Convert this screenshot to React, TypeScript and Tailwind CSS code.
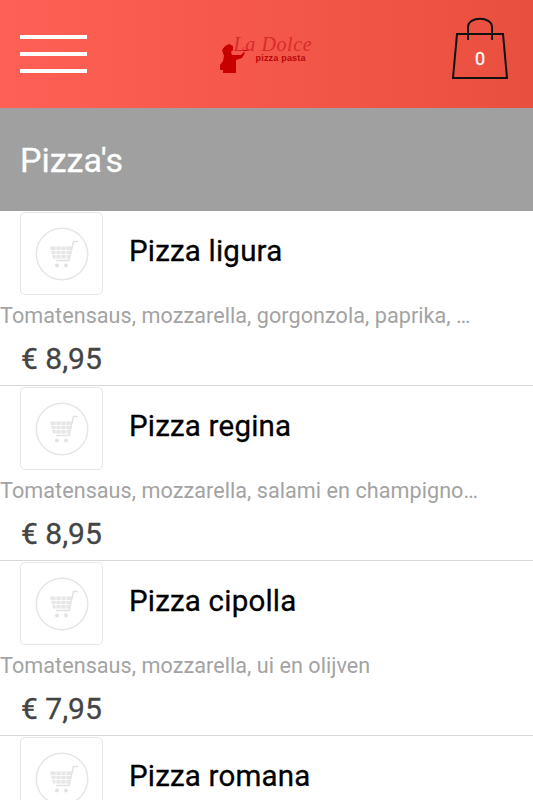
const pizzas = [
  { name: "Pizza ligura", desc: "Tomatensaus, mozzarella, gorgonzola, paprika, mais en ui", price: "€ 8,95" },
  { name: "Pizza regina", desc: "Tomatensaus, mozzarella, salami en champignons en ham", price: "€ 8,95" },
  { name: "Pizza cipolla", desc: "Tomatensaus, mozzarella, ui en olijven", price: "€ 7,95" },
  { name: "Pizza romana", desc: "Tomatensaus, mozzarella, ham en ananas", price: "€ 8,95" },
];

function CartThumb() {
  return (
    <div className="flex h-[83px] w-[83px] shrink-0 items-center justify-center rounded-[5px] border-[1.5px] border-[#e6e6e6] bg-white">
      <svg width="54" height="54" viewBox="0 0 54 54" fill="none">
        <circle cx="27" cy="27" r="25.7" stroke="#e6e6e6" strokeWidth="1.5" />
        <path d="M43 14.5h-4.5l-4.5 19H21" stroke="#e2e2e2" strokeWidth="1.5" />
        <path d="M15 19.5h22l-3 12H18z" fill="#e6e6e6" />
        <path d="M21 19.5v12M26 19.5v12M31 19.5v12M16 23.5h20M17 27.5h18" stroke="#fff" strokeWidth="0.8" />
        <circle cx="22" cy="38.5" r="2" fill="#e2e2e2" />
        <circle cx="31" cy="38.5" r="2" fill="#e2e2e2" />
      </svg>
    </div>
  );
}

function Logo() {
  return (
    <div className="relative h-[40px] w-[94px] text-[#b80808]">
      <svg className="absolute left-[-3px] top-[9px]" width="28" height="31" viewBox="0 0 28 31" fill="#c90000">
        <path d="M5 3l4-2 4 2 0 4-2 2 1 3 9 0 3-3 1 1-3 5-6 2 0 13-13 0 0-3-3 0 0-5 3-4 1-5-1-3-1-3z" />
        <path d="M23 7h5v1h-5z" />
      </svg>
      <span className="absolute left-[11px] top-[2px] font-['Liberation_Serif',serif] text-[20px] italic leading-[16px] tracking-[0.6px] text-[#d92b2b]">
        La Dolce
      </span>
      <span className="absolute left-[33px] top-[18px] font-['Liberation_Sans',sans-serif] text-[9px] font-bold leading-[12px] tracking-[0.2px]">
        pizza pasta
      </span>
    </div>
  );
}

export default function App() {
  return (
    <div className="h-[800px] w-[533px] overflow-hidden bg-white font-['Roboto',sans-serif]">
      <header className="flex h-[108px] items-center justify-between bg-gradient-to-r from-[#ff6055] to-[#e94f3e] pl-5 pr-[25px]">
        <div className="flex w-[67px] flex-col gap-[13px]">
          <span className="h-[4px] bg-white" />
          <span className="h-[4px] bg-white" />
          <span className="h-[4px] bg-white" />
        </div>
        <Logo />
        <div className="relative mb-[12px] h-[62px] w-[56px]">
          <svg width="56" height="62" viewBox="0 0 56 62" fill="none" stroke="#111" strokeWidth="2">
            <path d="M5 17H51L55 61H1z" />
            <path d="M16 23V10C16 -1 40 -1 40 10V23" />
          </svg>
          <span className="absolute left-0 right-0 top-[31px] text-center text-[18px] leading-[22px] text-white [-webkit-text-stroke:0.3px_#fff]">0</span>
        </div>
      </header>
      <div className="flex h-[103px] items-center bg-[#a0a0a0] px-5">
        <h1 className="text-[34px] leading-none text-white [-webkit-text-stroke:0.3px_#fff]">Pizza's</h1>
      </div>
      <ul>
        {pizzas.map((p) => (
          <li key={p.name} className="h-[175px] border-b border-[#d8d8d8] pt-px">
            <div className="flex items-center gap-[26px] pl-5">
              <CartThumb />
              <span className="mb-[3px] text-[29.5px] leading-none tracking-[0.2px] text-black [-webkit-text-stroke:0.3px_#000]">{p.name}</span>
            </div>
            <p className="mt-[9px] w-[480px] truncate text-[21.6px] leading-[24px] tracking-[0.05px] text-[#a3a3a3]">{p.desc}</p>
            <p className="mt-[13px] pl-[21px] text-[30px] leading-[36px] text-[#444] [-webkit-text-stroke:0.3px_#444]">{p.price}</p>
          </li>
        ))}
      </ul>
    </div>
  );
}
